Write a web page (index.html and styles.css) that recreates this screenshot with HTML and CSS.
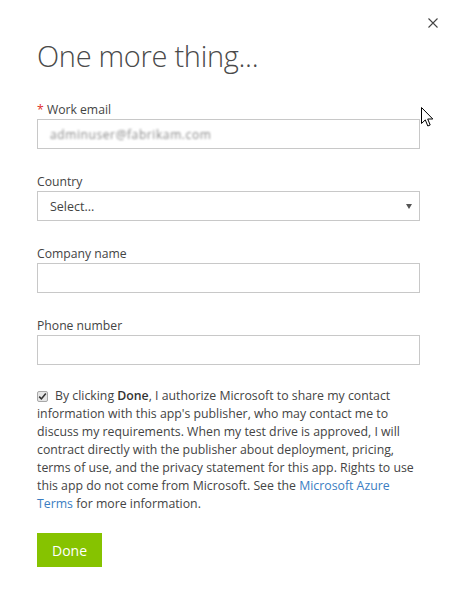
FILE: index.html
```html
<!DOCTYPE html>
<html lang="en">
<head>
<meta charset="utf-8">
<title>One more thing...</title>
<link rel="stylesheet" href="styles.css">
</head>
<body>
<div class="dialog">
  <button class="close" aria-label="Close">
    <svg width="10" height="10" viewBox="0 0 10 10"><path d="M0.5 0.5L9.5 9.5M9.5 0.5L0.5 9.5" stroke="#444" stroke-width="1.1" fill="none"/></svg>
  </button>
  <h1 class="title">One more thing...</h1>
  <form class="form">
    <div class="field">
      <label class="label"><span class="req">*</span> Work email</label>
      <div class="input input-email"><span class="blurred">adminuser@fabrikam.com</span></div>
    </div>
    <div class="field">
      <label class="label">Country</label>
      <div class="input select"><span>Select...</span><span class="arrow"></span></div>
    </div>
    <div class="field">
      <label class="label">Company name</label>
      <div class="input"></div>
    </div>
    <div class="field">
      <label class="label">Phone number</label>
      <div class="input"></div>
    </div>
    <p class="consent"><span class="check"><svg width="9" height="9" viewBox="0 0 9 9"><path d="M1.2 4.6L3.4 6.9L7.8 1.6" stroke="#333" stroke-width="1.6" fill="none"/></svg></span>By clicking <b>Done</b>, I authorize Microsoft to share my contact<br>information with this app's publisher, who may contact me to<br>discuss my requirements. When my test drive is approved, I will<br>contract directly with the publisher about deployment, pricing,<br>terms of use, and the privacy statement for this app. Rights to use<br>this app do not come from Microsoft. See the <a href="#">Microsoft Azure<br>Terms</a> for more information.</p>
    <div class="actions"><button type="button" class="done">Done</button></div>
  </form>
  <svg class="cursor" width="13" height="21" viewBox="0 0 13 21"><path d="M0.5 0.5L0.5 16.5L4.3 12.9L6.8 19L9.2 18L6.7 12L11.8 12Z" fill="#fff" stroke="#000" stroke-width="1"/></svg>
</div>
</body>
</html>
```
FILE: styles.css
```css
html, body {
  margin: 0;
  padding: 0;
  background: #fff;
}
body {
  font-family: "Open Sans", "Noto Sans", sans-serif;
  color: #444;
  font-size: 12px;
}
.dialog {
  position: relative;
  width: 459px;
  height: 608px;
  box-sizing: border-box;
  padding: 36px 39px 0 37px;
}
.close {
  position: absolute;
  top: 18px;
  left: 428px;
  width: 10px;
  height: 10px;
  padding: 0;
  border: 0;
  background: none;
  display: flex;
}
.title {
  margin: 0 0 26px;
  font-weight: 300;
  font-size: 29px;
  line-height: 40px;
  color: #4a4a4a;
  letter-spacing: -0.3px;
}
.form {
  display: flex;
  flex-direction: column;
  width: 383px;
}
.field {
  display: flex;
  flex-direction: column;
  gap: 1px;
  margin-bottom: 25px;
}
.label {
  font-size: 12.2px;
  line-height: 16px;
  color: #444;
}
.req {
  color: #e0302a;
}
.input {
  height: 30px;
  box-sizing: border-box;
  border: 1px solid #c8c8c8;
  background: #fff;
  display: flex;
  align-items: center;
  padding: 0 12px;
  font-size: 12.5px;
  color: #444;
}
.blurred {
  color: #8a8a8a;
  filter: blur(0.8px);
  letter-spacing: 0.6px;
  font-size: 12px;
}
.select {
  justify-content: space-between;
  padding-right: 7px;
}
.arrow {
  width: 0;
  height: 0;
  border-left: 3px solid transparent;
  border-right: 3px solid transparent;
  border-top: 5px solid #555;
}
.consent {
  margin: -3px 0 0;
  font-size: 12.3px;
  line-height: 18px;
  color: #444;
  white-space: nowrap;
}
.consent b {
  font-weight: 600;
  color: #333;
}
.consent a {
  color: #3a7dc2;
  text-decoration: none;
}
.check {
  display: inline-flex;
  align-items: center;
  justify-content: center;
  width: 11px;
  height: 11px;
  box-sizing: border-box;
  border: 1px solid #a8a8a8;
  background: #e6e6e6;
  border-radius: 2px;
  margin-right: 7px;
  vertical-align: -1px;
}
.actions {
  margin-top: 20px;
  display: flex;
}
.done {
  width: 65px;
  height: 34px;
  border: 0;
  background: #86c300;
  color: #fff;
  font-family: "Open Sans", "Noto Sans", sans-serif;
  font-size: 14px;
  padding: 0;
}
.cursor {
  position: absolute;
  left: 421px;
  top: 107px;
}
```
